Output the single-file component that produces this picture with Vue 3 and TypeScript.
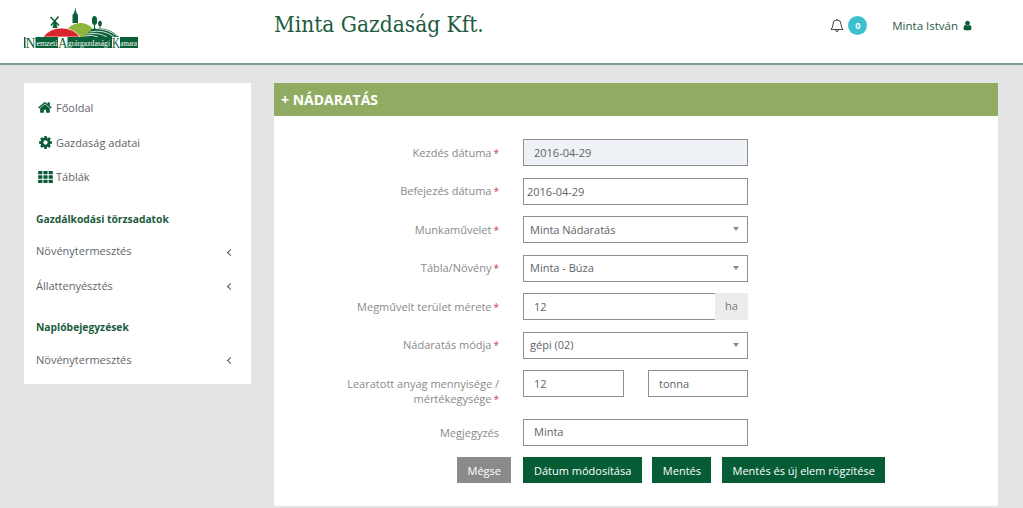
<script setup lang="ts">
interface Field {
  label: string[];
  value: string;
  required?: boolean;
  kind: "date" | "text" | "select" | "disabled" | "unit" | "pair";
  second?: string;
}

const fields: Field[] = [
  { label: ["Kezdés dátuma"], value: "2016-04-29", required: true, kind: "disabled" },
  { label: ["Befejezés dátuma"], value: "2016-04-29", required: true, kind: "date" },
  { label: ["Munkaművelet"], value: "Minta Nádaratás", required: true, kind: "select" },
  { label: ["Tábla/Növény"], value: "Minta - Búza", required: true, kind: "select" },
  { label: ["Megművelt terület mérete"], value: "12", required: true, kind: "unit", second: "ha" },
  { label: ["Nádaratás módja"], value: "gépi (02)", required: true, kind: "select" },
  { label: ["Learatott anyag mennyisége /", "mértékegysége"], value: "12", required: true, kind: "pair", second: "tonna" },
  { label: ["Megjegyzés"], value: "Minta", kind: "text" },
];

const homePath =
  "M1408 992v480q0 26-19 45t-45 19h-384v-384h-256v384h-384q-26 0-45-19t-19-45v-480q0-1 .5-3t.5-3l575-474 575 474q1 2 1 6zm223-69l-62 74q-8 9-21 11h-3q-13 0-21-7l-692-577-692 577q-12 8-24 7-13-2-21-11l-62-74q-8-10-7-23.5t11-21.5l719-599q32-26 76-26t76 26l244 204v-195q0-14 9-23t23-9h192q14 0 23 9t9 23v408l219 182q10 8 11 21.5t-7 23.5z";
const cogPath =
  "M1152 896q0-106-75-181t-181-75-181 75-75 181 75 181 181 75 181-75 75-181zm512-109v222q0 12-8 23t-20 13l-185 28q-19 54-39 91 35 50 107 138 10 12 10 25t-9 23q-27 37-99 108t-94 71q-12 0-26-9l-138-108q-44 23-91 38-16 136-29 186-7 28-36 28h-222q-14 0-24.5-8.5t-11.5-21.5l-28-184q-49-16-90-37l-141 107q-10 9-25 9-14 0-25-11-126-114-165-168-7-10-7-23 0-12 8-23 15-21 51-66.5t54-70.5q-27-50-41-99l-183-27q-13-2-21-12.5t-8-23.5v-222q0-12 8-23t19-13l186-28q14-46 39-92-40-57-107-138-10-12-10-24 0-10 9-23 26-36 98.5-107.5t94.5-71.5q13 0 26 10l138 107q44-23 91-38 16-136 29-186 7-28 36-28h222q14 0 24.5 8.5t11.5 21.5l28 184q49 16 90 37l142-107q9-9 24-9 13 0 25 10 129 119 165 170 7 8 7 22 0 12-8 23-15 21-51 66.5t-54 70.5q26 50 41 98l183 28q13 2 21 12.5t8 23.5z";
const userPath =
  "M1536 1399q0 109-62.5 187t-150.5 78h-854q-88 0-150.5-78t-62.5-187q0-85 8.5-160.5t31.5-152 58.5-131 94-89 134.5-34.5q131 128 313 128t313-128q76 0 134.5 34.5t94 89 58.5 131 31.5 152 8.5 160.5zm-256-887q0 159-112.5 271.5t-271.5 112.5-271.5-112.5-112.5-271.5 112.5-271.5 271.5-112.5 271.5 112.5 112.5 271.5z";
</script>

<template>
  <div class="page">
    <header class="topbar">
      <div class="logo-cell">
        <svg class="logo" viewBox="0 0 116 42" width="116" height="42">
          <!-- church -->
          <path d="M48.5 15 V7 L50 5 L51 1.5 V0 H51.6 V1.5 L52.6 5 L54 7 V15 Z" fill="#0a6038" />
          <!-- windmill -->
          <path d="M28.5 20 L30 14 H32 L33.5 20 Z" fill="#0a6038" />
          <path d="M26.5 9 L35 17.5 M34.5 8.5 L27 17.5" stroke="#0a6038" stroke-width="1.6" />
          <!-- trees -->
          <ellipse cx="70.5" cy="12.5" rx="2.6" ry="4.6" fill="#0a6038" />
          <rect x="70" y="16" width="1" height="5" fill="#0a6038" />
          <ellipse cx="76" cy="15.5" rx="1.9" ry="2.8" fill="#0a6038" />
          <rect x="75.6" y="17" width="0.9" height="4" fill="#0a6038" />
          <!-- hills -->
          <path d="M44 20 Q51 14.5 58 15 Q65 16 70 22 L60 29 L52 29 Q50 23 44 20 Z" fill="#8fb63c" />
          <path d="M19 29 Q26 20 37 20 Q50 20 56 29 Z" fill="#d9262c" stroke="#fff" stroke-width="0.7" />
          <path d="M68 21 Q84 18 95 29 H60 Z" fill="#0a6038" />
          <path d="M66 24 Q80 21 90 29 M63 26 Q75 24 83 29 M61 28 Q68 26 74 29 M72 20.5 Q84 21 93 28" stroke="#fff" stroke-width="0.8" fill="none" />
          <!-- banner -->
          <rect x="0" y="29" width="114" height="11" fill="#0a6038" />
          <rect x="1.5" y="29" width="10" height="11" fill="#fff" />
          <rect x="34" y="29" width="9.5" height="11" fill="#fff" />
          <rect x="88" y="29" width="8" height="11" fill="#fff" />
          <text x="1.5" y="39.5" class="logo-big" textLength="10" lengthAdjust="spacingAndGlyphs">N</text>
          <text x="12.5" y="37.5" class="logo-small" textLength="21" lengthAdjust="spacingAndGlyphs">emzeti</text>
          <text x="34" y="39.5" class="logo-big" textLength="9.5" lengthAdjust="spacingAndGlyphs">A</text>
          <text x="44" y="37.5" class="logo-small" textLength="42" lengthAdjust="spacingAndGlyphs">grárgazdasági</text>
          <text x="88" y="39.5" class="logo-big" textLength="8" lengthAdjust="spacingAndGlyphs">K</text>
          <text x="96.5" y="37.5" class="logo-small" textLength="16.5" lengthAdjust="spacingAndGlyphs">amara</text>
        </svg>
      </div>
      <h1 class="brand">Minta Gazdaság Kft.</h1>
      <div class="top-right">
        <svg class="bell" viewBox="0 0 14 15" width="14" height="15">
          <path
            d="M1 11.5 Q3 9.5 3 6 Q3 2 7 2 Q11 2 11 6 Q11 9.5 13 11.5 Z M5.6 11.8 Q5.8 13.6 7 13.6 Q8.2 13.6 8.4 11.8 M7 2 V1"
            fill="none"
            stroke="#3f4a46"
            stroke-width="1"
          />
        </svg>
        <span class="badge">0</span>
        <span class="username">Minta István</span>
        <svg class="user-icon" viewBox="0 0 1792 1792" width="11" height="11">
          <path :d="userPath" fill="#0a5c38" />
        </svg>
      </div>
    </header>

    <div class="content">
      <nav class="sidebar">
        <a class="nav-link">
          <svg class="nav-icon" viewBox="0 0 1792 1792" width="15" height="15"><path :d="homePath" /></svg>
          Főoldal
        </a>
        <a class="nav-link">
          <svg class="nav-icon" viewBox="0 0 1792 1792" width="15" height="15"><path :d="cogPath" /></svg>
          Gazdaság adatai
        </a>
        <a class="nav-link">
          <svg class="nav-icon" viewBox="0 0 16 13" width="15" height="12">
            <rect x="0" y="0" width="4.6" height="3.6" rx="0.5" />
            <rect x="5.7" y="0" width="4.6" height="3.6" rx="0.5" />
            <rect x="11.4" y="0" width="4.6" height="3.6" rx="0.5" />
            <rect x="0" y="4.7" width="4.6" height="3.6" rx="0.5" />
            <rect x="5.7" y="4.7" width="4.6" height="3.6" rx="0.5" />
            <rect x="11.4" y="4.7" width="4.6" height="3.6" rx="0.5" />
            <rect x="0" y="9.4" width="4.6" height="3.6" rx="0.5" />
            <rect x="5.7" y="9.4" width="4.6" height="3.6" rx="0.5" />
            <rect x="11.4" y="9.4" width="4.6" height="3.6" rx="0.5" />
          </svg>
          Táblák
        </a>

        <h4 class="nav-head">Gazdálkodási törzsadatok</h4>
        <a class="nav-sub">Növénytermesztés <i class="chev"></i></a>
        <a class="nav-sub">Állattenyésztés <i class="chev"></i></a>

        <h4 class="nav-head second">Naplóbejegyzések</h4>
        <a class="nav-sub">Növénytermesztés <i class="chev"></i></a>
      </nav>

      <main class="panel">
        <div class="panel-title">+ NÁDARATÁS</div>
        <form class="form" @submit.prevent>
          <div v-for="f in fields" :key="f.label[0]" class="row" :class="{ tall: f.kind === 'pair' }">
            <label class="label">
              <span v-for="line in f.label" :key="line" class="label-line">{{ line }}</span>
              <span v-if="f.required" class="req">*</span>
            </label>
            <div class="control">
              <input v-if="f.kind === 'disabled'" class="input disabled" :value="f.value" readonly />
              <input v-else-if="f.kind === 'date' || f.kind === 'text'" class="input" :class="{ tight: f.kind === 'date' }" :value="f.value" />
              <div v-else-if="f.kind === 'select'" class="select">
                <span>{{ f.value }}</span>
                <i class="caret"></i>
              </div>
              <div v-else-if="f.kind === 'unit'" class="group">
                <input class="input joined" :value="f.value" />
                <span class="addon">{{ f.second }}</span>
              </div>
              <div v-else class="pair">
                <input class="input" :value="f.value" />
                <input class="input" :value="f.second" />
              </div>
            </div>
          </div>
          <div class="actions">
            <button class="btn grey" type="button">Mégse</button>
            <button class="btn" type="button">Dátum módosítása</button>
            <button class="btn" type="submit">Mentés</button>
            <button class="btn" type="button">Mentés és új elem rögzítése</button>
          </div>
        </form>
      </main>
    </div>
  </div>
</template>

<style>
html,
body {
  margin: 0;
  overflow: hidden;
}
</style>

<style scoped>
.page {
  height: 508px;
  overflow: hidden;
  background: #e4e4e4;
  font-family: "Open Sans", sans-serif;
  font-size: 11px;
  color: #5f6368;
}

.topbar {
  height: 65px;
  box-sizing: border-box;
  display: flex;
  background: #fff;
  border-bottom: 2px solid #7f9c90;
}
.logo-cell {
  width: 274px;
  padding: 8px 0 0 24px;
  box-sizing: border-box;
}
.logo {
  display: block;
}
.logo-big {
  font-family: "Liberation Serif", serif;
  font-size: 14px;
  fill: #0a6038;
}
.logo-small {
  font-family: "Liberation Serif", serif;
  font-size: 8px;
  fill: #fff;
}
.brand {
  margin: 8px 0 0;
  font-family: "DejaVu Serif", serif;
  font-stretch: condensed;
  font-weight: 400;
  font-size: 22.5px;
  line-height: 32px;
  color: #1d5c40;
  flex: 1;
}
.top-right {
  display: flex;
  align-items: center;
  height: 51px;
  padding-right: 50px;
}
.bell {
  margin-right: 4px;
}
.badge {
  width: 19px;
  height: 19px;
  border-radius: 50%;
  background: #3cc0d0;
  color: #fff;
  font-size: 9px;
  font-weight: 700;
  display: flex;
  align-items: center;
  justify-content: center;
  margin-right: 25px;
}
.username {
  color: #2c5c48;
  font-size: 11.5px;
  margin-right: 4px;
}

.content {
  display: flex;
  align-items: flex-start;
  padding: 18px 25px 0 24px;
  gap: 23px;
}

.sidebar {
  width: 227px;
  height: 301px;
  box-sizing: border-box;
  background: #fff;
  padding: 7.5px 0 0 12px;
  flex: none;
}
.nav-link {
  display: flex;
  align-items: center;
  height: 34.5px;
  padding-left: 2px;
  color: #5f6368;
}
.nav-icon {
  width: 15px;
  margin-right: 3px;
  fill: #0a5c38;
}
.nav-head {
  margin: 16.5px 0 0;
  font-size: 10.3px;
  line-height: 16px;
  font-weight: 700;
  color: #1d5c40;
}
.nav-head.second {
  margin-top: 16px;
}
.nav-sub {
  display: flex;
  align-items: center;
  justify-content: space-between;
  height: 34.5px;
  padding-right: 18px;
  color: #62666b;
}
.nav-head + .nav-sub {
  margin-top: 7px;
}
.nav-head.second + .nav-sub {
  margin-top: 7.5px;
}
.chev {
  width: 4px;
  height: 4px;
  border-left: 1px solid #555;
  border-bottom: 1px solid #555;
  transform: rotate(45deg);
  margin-top: 3px;
}

.panel {
  flex: 1;
  height: 423px;
  background: #fff;
}
.panel-title {
  height: 33px;
  line-height: 33px;
  background: #92ab63;
  color: #fff;
  font-size: 14px;
  font-weight: 700;
  padding-left: 7px;
}
.form {
  padding-top: 23px;
}
.row {
  display: grid;
  grid-template-columns: 225px 225px;
  column-gap: 24px;
  align-items: center;
  margin-bottom: 11.5px;
  min-height: 27px;
}
.row.tall {
  min-height: 37px;
  align-items: start;
}
.label {
  text-align: right;
  color: #8a8a8a;
  line-height: 15px;
}
.label-line:first-child:not(:nth-last-child(2)) {
  display: block;
}
.row.tall .label {
  padding-top: 6px;
}
.req {
  color: #c9455c;
  margin-left: 2px;
  font-size: 10px;
}
.input {
  width: 100%;
  height: 27px;
  box-sizing: border-box;
  border: 1px solid #8f8f8f;
  background: #fff;
  padding: 0 10px 1px;
  font: inherit;
  color: #5f6368;
  outline: none;
  display: block;
}
.input.tight {
  padding-left: 3px;
  padding-bottom: 0;
}
.input.disabled {
  background: #eef1f5;
  padding-bottom: 0;
}
.select {
  height: 27px;
  box-sizing: border-box;
  border: 1px solid #8f8f8f;
  display: flex;
  align-items: center;
  justify-content: space-between;
  padding: 0 8px 1px 6px;
  color: #5f6368;
}
.caret {
  width: 0;
  height: 0;
  border-left: 3.5px solid transparent;
  border-right: 3.5px solid transparent;
  border-top: 4px solid #888;
}
.group {
  display: flex;
}
.input.joined {
  flex: 1;
  border-right: none;
}
.addon {
  width: 33px;
  height: 27px;
  line-height: 25px;
  background: #ececec;
  text-align: center;
  color: #777;
}
.pair {
  display: grid;
  grid-template-columns: 101px 100px;
  column-gap: 24px;
}
.actions {
  display: flex;
  margin: 0 0 0 183px;
  gap: 10.5px;
  height: 26px;
}
.btn {
  border: none;
  background: #055c35;
  color: #fff;
  font: inherit;
  padding: 0 10.5px;
  height: 26px;
}
.btn.grey {
  background: #8a8a8a;
  margin-right: 1.5px;
}
</style>
